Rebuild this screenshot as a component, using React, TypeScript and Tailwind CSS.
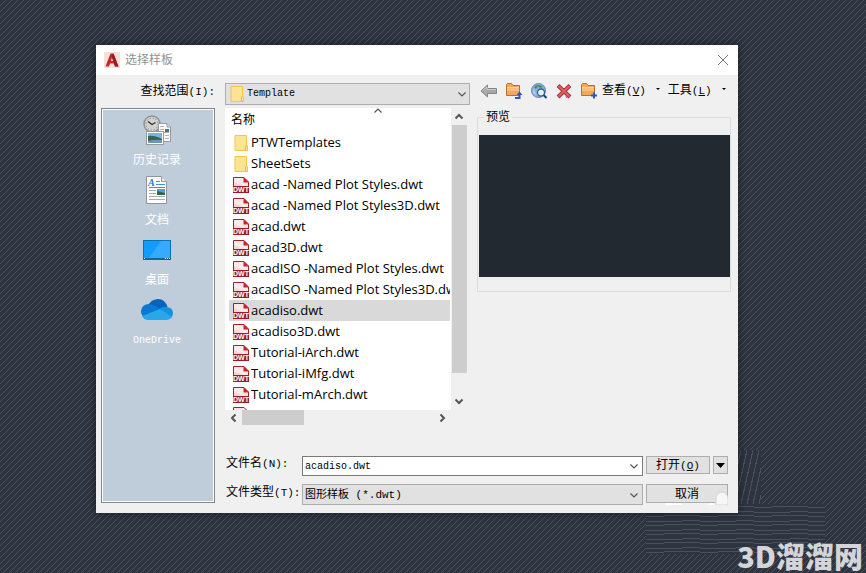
import React, { useState } from "react";

interface FileEntry {
  name: string;
  type: "folder" | "dwt";
}

const files: FileEntry[] = [
  { name: "PTWTemplates", type: "folder" },
  { name: "SheetSets", type: "folder" },
  { name: "acad -Named Plot Styles.dwt", type: "dwt" },
  { name: "acad -Named Plot Styles3D.dwt", type: "dwt" },
  { name: "acad.dwt", type: "dwt" },
  { name: "acad3D.dwt", type: "dwt" },
  { name: "acadISO -Named Plot Styles.dwt", type: "dwt" },
  { name: "acadISO -Named Plot Styles3D.dwt", type: "dwt" },
  { name: "acadiso.dwt", type: "dwt" },
  { name: "acadiso3D.dwt", type: "dwt" },
  { name: "Tutorial-iArch.dwt", type: "dwt" },
  { name: "Tutorial-iMfg.dwt", type: "dwt" },
  { name: "Tutorial-mArch.dwt", type: "dwt" },
];

const FolderIcon: React.FC = () => (
  <svg width="16" height="16" viewBox="0 0 16 16" className="shrink-0" aria-hidden="true">
    <path d="M2 0.5H13.5V10L14.5 11V15.5H2Z" fill="#ffe394" stroke="#edc84f" />
    <path d="M12.5 15.5V11L13.5 10" fill="none" stroke="#e9bd3c" />
  </svg>
);

const DwtIcon: React.FC = () => (
  <svg width="16" height="16" viewBox="0 0 16 16" className="shrink-0" aria-hidden="true">
    <path d="M0.5 0.5H11L15.5 5V15.5H0.5Z" fill="#fbeaea" stroke="#a3202a" />
    <path d="M1 5L10 9H1Z" fill="#f5d5d6" />
    <path d="M10.500 0L16 5.500H10.500Z" fill="#cf1f2b" />
    <rect y="9" width="16" height="7" fill="#9c1c26" />
    <text x="8" y="15" textAnchor="middle" fill="#fff" className="font-['Liberation_Sans',sans-serif] text-[7px] font-bold">
      DWT
    </text>
  </svg>
);

const HistoryIcon: React.FC = () => (
  <svg width="32" height="32" viewBox="0 0 32 32" aria-hidden="true">
    <circle cx="11" cy="9" r="8" fill="#d2d2d0" stroke="#8e9296" strokeWidth="1.500" />
    <circle cx="11" cy="9" r="6" fill="none" stroke="#777" strokeDasharray="1 2.140" />
    <path d="M7 6.500L11 9.500L14.500 7.500" fill="none" stroke="#333" strokeWidth="1.300" />
    <path d="M17.500 8.500H26L29.500 12V26.500H17.500Z" fill="#fafafa" stroke="#9a9a9a" />
    <path d="M26 8.500V12H29.500" fill="#ddd" stroke="#9a9a9a" />
    <path d="M19 11.500H23M19 14.500H23M19 17.500H28M24 20.500H28M24 23.500H28" stroke="#b0b0b0" />
    <rect x="24" y="14" width="4" height="3" fill="#3577a8" />
    <rect x="5.500" y="16.500" width="17" height="13" fill="#fff" stroke="#999" />
    <rect x="7" y="18" width="14" height="10" fill="#75b6e5" />
    <path d="M7 21Q13 20 21 24V28H7Z" fill="#2f694e" />
    <path d="M7 26Q14 24 21 25V28H7Z" fill="#7196b5" />
  </svg>
);

const DocumentIcon: React.FC = () => (
  <svg width="32" height="32" viewBox="0 0 32 32" aria-hidden="true">
    <path d="M5.500 1.500H20L25.500 7V28.500H5.500Z" fill="#fdfdfd" stroke="#909497" />
    <path d="M20.500 1.500V6.500H25.500" fill="#e6e6e6" stroke="#999" />
    <text x="7" y="11" fill="#1b7dc1" className="font-['Liberation_Serif',serif] text-[10px] font-bold italic">
      A
    </text>
    <path d="M15 6.500H19M15 9.500H24M8 12.500H24" stroke="#3596d5" />
    <path d="M8 15.500H15M8 18.500H15M8 21.500H24M8 24.500H24" stroke="#aaa" />
    <rect x="16" y="14" width="8" height="6" fill="#579fd0" />
    <path d="M16 16L24 18V20H16Z" fill="#2f654d" />
  </svg>
);

const DesktopIcon: React.FC = () => (
  <svg width="32" height="32" viewBox="0 0 32 32" aria-hidden="true">
    <rect x="2.500" y="5.500" width="27" height="19" fill="#139cff" stroke="#0872b5" />
    <path d="M20 6H29V23H8Z" fill="#36aaff" />
    <rect x="2" y="23" width="28" height="2" fill="#066aa9" />
    <path d="M3 23.500H4M24 23.500H25M26 23.500H27M28 23.500H29" stroke="#fff" />
  </svg>
);

const OneDriveIcon: React.FC = () => (
  <svg width="32" height="32" viewBox="0 0 32 32" aria-hidden="true">
    <path d="M7 10Q11 4 17 4Q24 4 26.500 12L19 17Z" fill="#0864b8" />
    <path d="M3 22Q0 20 0 16Q1 9 8 9Q11 9 14 11L20 14.500L3 22Z" fill="#0b78d2" />
    <path d="M18 14Q22 11 26 12Q32 13 32 18Q32 21 30 23Z" fill="#168fe0" />
    <path d="M1 21L19 14L31 22Q29 25 26 25H7Q3 25 1 21Z" fill="#28a8ea" />
  </svg>
);

const places = [
  { label: "历史记录", icon: <HistoryIcon /> },
  { label: "文档", icon: <DocumentIcon /> },
  { label: "桌面", icon: <DesktopIcon /> },
  { label: "OneDrive", icon: <OneDriveIcon /> },
];

const FolderTool: React.FC<{ badge: React.ReactNode }> = ({ badge }) => (
  <svg width="18" height="18" viewBox="0 0 18 18" aria-hidden="true">
    <path d="M1.500 2.500L2.500 1.500H6.500L8 3.500H14.500V13.500H1.500Z" fill="#f0a85a" stroke="#b5712c" />
    <path d="M2 5.500H14" stroke="#fbd19b" />
    <path d="M2 6H14V9H2Z" fill="#f7bd7c" />
    {badge}
  </svg>
);

const tools = [
  {
    label: "返回",
    icon: (
      <svg width="18" height="18" viewBox="0 0 18 18" aria-hidden="true">
        <path d="M1 9L7.500 3V6.500H16.500V11.500H7.500V15Z" fill="#a8a8a8" stroke="#858585" />
        <path d="M3 8.500L7 5V7.500H16" fill="none" stroke="#c9c9c9" />
      </svg>
    ),
  },
  {
    label: "上一级",
    icon: (
      <FolderTool
        badge={
          <>
            <path d="M10 16H14.500V12.500" fill="none" stroke="#2d55c4" strokeWidth="2" />
            <path d="M11.500 13L14.500 9.500L17.500 13Z" fill="#2d55c4" />
          </>
        }
      />
    ),
  },
  {
    label: "搜索 Web",
    icon: (
      <svg width="18" height="18" viewBox="0 0 18 18" aria-hidden="true">
        <circle cx="8.500" cy="8.500" r="7" fill="#8ab0e2" stroke="#6583b5" />
        <path d="M4 5Q8 1 13 5L10 6L8 4L6 7Z" fill="#3f8b53" />
        <path d="M3 7L5 9L6 13L3 11Z" fill="#b4cdf0" />
        <circle cx="11" cy="10.500" r="3.500" fill="#e6f2fa" stroke="#355f8c" strokeWidth="1.300" />
        <path d="M13.500 13L16.500 16" stroke="#173f75" strokeWidth="2" />
      </svg>
    ),
  },
  {
    label: "删除",
    icon: (
      <svg width="18" height="18" viewBox="0 0 18 18" aria-hidden="true">
        <path d="M3 3.500L15 15M15 3.500L3 15" stroke="#a82f35" strokeWidth="4" />
        <path d="M3.500 4L14.500 14.500M14.500 4L3.500 14.500" stroke="#dc5f61" strokeWidth="2" />
        <path d="M10 14H12M11 15.500H12" stroke="#f3f" />
      </svg>
    ),
  },
  {
    label: "创建新文件夹",
    icon: <FolderTool badge={<path d="M14 10.500V16.500M11 13.500H17" stroke="#2d55c4" strokeWidth="2" />} />,
  },
];

const Chevron: React.FC<{ dir: "up" | "down" | "left" | "right"; thick?: boolean }> = ({ dir, thick }) => {
  const paths = {
    up: "M1.500 6.500L5 3L8.500 6.500",
    down: "M1.500 3.500L5 7L8.500 3.500",
    left: "M6.500 1.500L3 5L6.500 8.500",
    right: "M3.500 1.500L7 5L3.500 8.500",
  };
  return (
    <svg width="10" height="10" viewBox="0 0 10 10" aria-hidden="true">
      <path d={paths[dir]} fill="none" stroke="#555" strokeWidth={thick ? 2 : 1.2} />
    </svg>
  );
};

// Chinese text with a smaller monospaced access key after it
const KeyLabel: React.FC<{ text: string; hotkey: string; tail?: string; underline?: boolean }> = ({
  text,
  hotkey,
  tail,
  underline,
}) => (
  <>
    {text}
    <span className="text-[11px]">
      (<span className={underline ? "underline" : ""}>{hotkey}</span>){tail}
    </span>
  </>
);

const Backdrop: React.FC = () => (
  <svg className="absolute inset-0 h-full w-full" shapeRendering="crispEdges" aria-hidden="true">
    <defs>
      <pattern id="diagonal" width="6" height="6" patternUnits="userSpaceOnUse">
        <rect width="6" height="6" fill="#2e3440" />
        {[0, 1, 2, 3, 4, 5].map((i) => (
          <rect key={i} x={i} y={5 - i} width="1" height="1" fill="#4b505c" />
        ))}
      </pattern>
      <pattern id="flat" x="646" y="504" width="54" height="9" patternUnits="userSpaceOnUse">
        <rect width="54" height="9" fill="#2e3440" />
        <path d="M0 3.500H18M18 2.500H54M0 8.500H36M36 7.500H54" stroke="#4b505c" />
      </pattern>
      <pattern id="steep" x="741" y="450" width="6" height="27" patternUnits="userSpaceOnUse">
        <rect width="6" height="27" fill="#2e3440" />
        <path d="M0 27L6 0" stroke="#4b505c" />
      </pattern>
    </defs>
    <rect width="100%" height="100%" fill="url(#diagonal)" />
    <rect x="738" y="450" width="23" height="54" fill="url(#steep)" />
    <rect x="646" y="513" width="92" height="41" fill="url(#flat)" />
    <rect x="737" y="504" width="88" height="50" fill="url(#flat)" />
  </svg>
);

const SelectTemplateDialog: React.FC = () => {
  const [selected, setSelected] = useState("acadiso.dwt");

  return (
    <section
      role="dialog"
      aria-labelledby="dialog-title"
      className="relative bg-[#f0f0f0] text-xs text-black shadow-[0_0_8px_rgba(0,0,0,0.5)]"
    >
      <header className="flex h-[30px] items-center bg-white pr-[7px] pl-2">
        <svg width="16" height="16" viewBox="0 0 16 16" aria-hidden="true">
          <rect width="16" height="16" fill="#f8dfd8" />
          <path d="M1.500 14.500L6.500 1.500H9.500L14.500 14.500H11L10 11.500H6L5 14.500ZM7 9H9.200L8 5Z" fill="#c1272d" />
          <path d="M9.500 1.500L14.500 14.500H11L7.500 4Z" fill="#9c1b22" />
        </svg>
        <h1 id="dialog-title" className="ml-[5px] flex-1 pt-[2px] text-[#929292]">
          选择样板
        </h1>
        <button type="button" aria-label="关闭" className="flex h-4 w-4 items-center justify-center">
          <svg width="12" height="12" viewBox="0 0 12 12" aria-hidden="true">
            <path d="M1 1L11 11M11 1L1 11" stroke="#777" />
          </svg>
        </button>
      </header>

      <div className="pt-2 pr-[7px] pb-2 pl-[5px]">
        <div className="flex h-[22px]">
          <label htmlFor="look-in" className="w-[124px] pr-[10px] text-right leading-[18px]">
            <KeyLabel text="查找范围" hotkey="I" tail=":" />
          </label>
          <div className="relative w-[245px]">
            <select
              id="look-in"
              className="h-full w-full appearance-none border border-[#adadad] bg-[#e1e1e1] pl-[21px] text-[10px]"
            >
              <option>Template</option>
            </select>
            <span className="pointer-events-none absolute inset-y-0 left-1 flex items-center">
              <FolderIcon />
            </span>
            <span className="pointer-events-none absolute inset-y-0 right-[3px] flex items-center">
              <Chevron dir="down" />
            </span>
          </div>
          <div className="ml-[10px] flex h-4 items-center gap-[7px]">
            {tools.map((tool) => (
              <button key={tool.label} type="button" aria-label={tool.label}>
                {tool.icon}
              </button>
            ))}
          </div>
          <button type="button" className="ml-1 flex h-[15px] items-center gap-[10px] whitespace-nowrap">
            <span>
              <KeyLabel text="查看" hotkey="V" underline />
            </span>
            <svg width="4" height="6" viewBox="0 0 4 6" aria-hidden="true">
              <path d="M0 0H4L2 2Z" />
            </svg>
          </button>
          <button type="button" className="ml-2 flex h-[15px] items-center gap-[10px] whitespace-nowrap">
            <span>
              <KeyLabel text="工具" hotkey="L" underline />
            </span>
            <svg width="4" height="6" viewBox="0 0 4 6" aria-hidden="true">
              <path d="M0 0H4L2 2Z" />
            </svg>
          </button>
        </div>

        <div className="mt-[3px] flex">
          <nav className="mb-[2px] flex w-[114px] shrink-0 flex-col border border-[#7f858d] bg-[#bfcddb] pt-[6px] pr-[2px] inset-ring inset-ring-white">
            {places.map((place) => (
              <button key={place.label} type="button" className="flex h-[60px] flex-col items-center text-white">
                {place.icon}
                <span className={place.label === "OneDrive" ? "text-[10px] leading-7" : "leading-7"}>
                  {place.label}
                </span>
              </button>
            ))}
          </nav>

          <div className="ml-[10px] min-w-0 flex-1">
            <div className="flex items-start">
              <div className="grid w-[242px] shrink-0 grid-cols-[1fr_16px]">
                <div className="h-[302px] overflow-hidden bg-white font-['Open_Sans','Noto_Sans_CJK_SC',sans-serif]">
                  <div className="relative h-6 pl-[6px] leading-6">
                    名称
                    <span className="absolute top-[-2px] left-[148px]">
                      <Chevron dir="up" />
                    </span>
                  </div>
                  <ul className="pr-px pl-1">
                    {files.map((file) => (
                      <li key={file.name}>
                        <button
                          type="button"
                          onClick={() => setSelected(file.name)}
                          className={`flex h-[21px] w-full items-center gap-[2px] overflow-hidden pl-1 text-[13px] whitespace-nowrap ${
                            file.name === selected ? "bg-[#d9d9d9]" : ""
                          }`}
                        >
                          {file.type === "folder" ? <FolderIcon /> : <DwtIcon />}
                          {file.name}
                        </button>
                      </li>
                    ))}
                    {/* top edge of the next row, scrolled out of view */}
                    <li className="pt-[2px] pl-1">
                      <svg width="16" height="3" viewBox="0 0 16 3" aria-hidden="true">
                        <path d="M0.500 3V0.500H11L13.500 3" fill="#fbeaea" stroke="#a3202a" />
                      </svg>
                    </li>
                  </ul>
                </div>
                <div className="flex flex-col items-center">
                  <span className="flex h-[17px] items-center">
                    <Chevron dir="up" thick />
                  </span>
                  <div className="h-[248px] w-[15px] bg-[#cdcdcd]" />
                  <span className="mt-auto flex h-[18px] items-center">
                    <Chevron dir="down" thick />
                  </span>
                </div>
                <div className="flex h-4 items-start">
                  <span className="flex h-[15px] w-[17px] items-center justify-center">
                    <Chevron dir="left" thick />
                  </span>
                  <div className="h-[15px] w-[62px] bg-[#cdcdcd]" />
                  <span className="mr-1 ml-auto flex h-[15px] items-center">
                    <Chevron dir="right" thick />
                  </span>
                </div>
              </div>

              <fieldset className="ml-[10px] min-w-0 flex-1 border border-[#dcdcdc] pb-[14px] pl-px">
                <legend className="ml-[5px] px-[2px] pt-[3px] leading-[15px]">预览</legend>
                <div className="mt-[9px] h-[142px] bg-[#222931]" />
              </fieldset>
            </div>

            <div className="mt-[30px] flex items-start pr-[3px]">
              <label htmlFor="file-name" className="w-[77px] pl-px leading-4">
                <KeyLabel text="文件名" hotkey="N" tail=":" />
              </label>
              <div className="relative min-w-0 flex-1">
                <input
                  id="file-name"
                  value={selected}
                  onChange={(e) => setSelected(e.target.value)}
                  className="block h-5 w-full border border-[#7a7a7a] bg-white px-[2px] text-[10px]"
                />
                <span className="pointer-events-none absolute inset-y-0 right-1 flex items-center">
                  <Chevron dir="down" />
                </span>
              </div>
              <button
                type="button"
                className="ml-[3px] h-[18px] w-16 border border-[#adadad] bg-[#e1e1e1] leading-[18px]"
              >
                <KeyLabel text="打开" hotkey="O" underline />
              </button>
              <button
                type="button"
                aria-label="打开选项"
                className="ml-[3px] flex h-[18px] w-[15px] items-center justify-center border border-[#adadad] bg-[#e1e1e1]"
              >
                <svg width="9" height="5" viewBox="0 0 9 5" aria-hidden="true">
                  <path d="M0 0H9L4.500 5Z" />
                </svg>
              </button>
            </div>

            <div className="mt-2 flex items-start pr-[3px]">
              <label htmlFor="file-type" className="w-[77px] pl-px leading-[18px] whitespace-nowrap">
                <KeyLabel text="文件类型" hotkey="T" tail=":" />
              </label>
              <div className="relative min-w-0 flex-1">
                <select
                  id="file-type"
                  className="block h-[21px] w-full appearance-none border border-[#adadad] bg-[#e1e1e1] px-[2px] pt-[2px] text-[11px]"
                >
                  <option>图形样板 (*.dwt)</option>
                </select>
                <span className="pointer-events-none absolute inset-y-0 right-1 flex items-center">
                  <Chevron dir="down" />
                </span>
              </div>
              <div className="relative ml-[3px]">
                <button
                  type="button"
                  className="block h-[19px] w-[82px] border border-[#adadad] bg-[#e1e1e1] leading-5"
                >
                  取消
                </button>
                <svg
                  className="pointer-events-none absolute top-[6px] left-0 h-[15px] w-[82px]"
                  viewBox="0 0 82 15"
                  aria-hidden="true"
                >
                  <path d="M19 15V13H34L37 15ZM61 15L64 13H68L69 15Z" fill="#fff" />
                  <path d="M70 15V9A6 7 0 0 1 82 9V15Z" fill="#f7f7f7" stroke="#d5d5d5" />
                </svg>
              </div>
            </div>
          </div>
        </div>
      </div>
    </section>
  );
};

const App: React.FC = () => {
  return (
    <main className="relative min-h-screen overflow-hidden pt-[45px] pr-32 pb-[60px] pl-24 font-['Liberation_Mono','Noto_Sans_CJK_SC',monospace]">
      <Backdrop />
      <SelectTemplateDialog />
      <p className="absolute right-[3px] bottom-0 font-['Noto_Sans_CJK_SC',sans-serif] text-[29px] leading-9 font-black text-[#d3d5d8]">
        3D溜溜网
      </p>
    </main>
  );
};

export default App;
